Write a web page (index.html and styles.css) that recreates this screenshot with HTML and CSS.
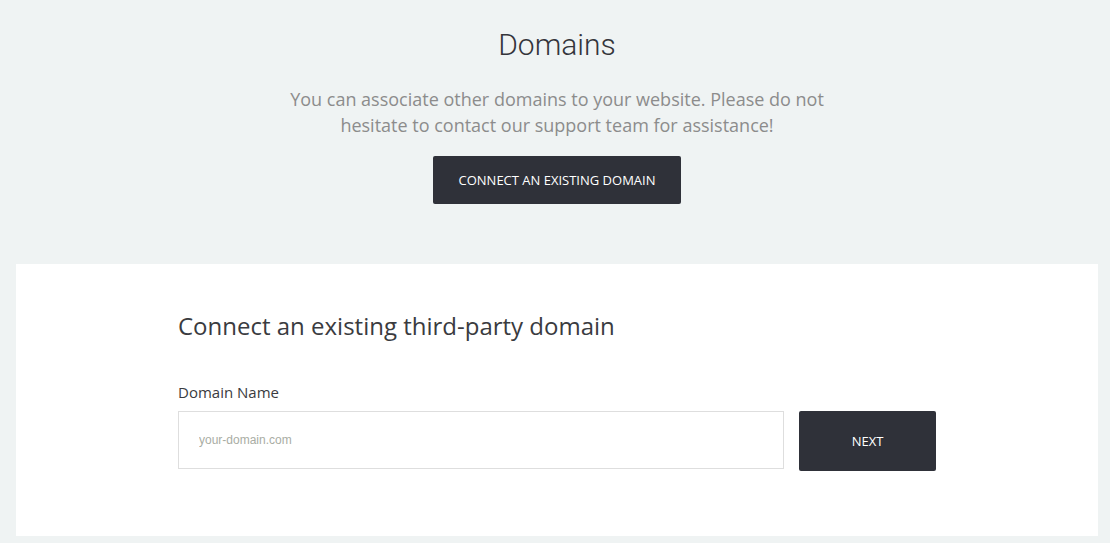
FILE: index.html
```html
<!DOCTYPE html>
<html>
<head>
<meta charset="utf-8">
<link rel="stylesheet" href="styles.css">
</head>
<body>
<div class="page">
  <section class="intro">
    <h1 class="title">Domains</h1>
    <p class="lead">You can associate other domains to your website. Please do not hesitate to contact our support team for assistance!</p>
    <button class="btn btn-connect">CONNECT AN EXISTING DOMAIN</button>
  </section>
  <section class="panel">
    <div class="panel-inner">
      <h2 class="panel-title">Connect an existing third-party domain</h2>
      <label class="label" for="domain">Domain Name</label>
      <div class="row">
        <input id="domain" class="input" type="text" placeholder="your-domain.com">
        <button class="btn btn-next">NEXT</button>
      </div>
    </div>
  </section>
</div>
</body>
</html>
```
FILE: styles.css
```css
html, body {
  margin: 0;
  padding: 0;
  background: #eff3f3;
}
.page {
  padding: 0 12px 8px 16px;
}
.intro {
  display: flex;
  flex-direction: column;
  align-items: center;
  padding-top: 27px;
  padding-bottom: 60px;
}
.title {
  margin: 0;
  font-family: Roboto, sans-serif;
  font-weight: 300;
  font-size: 30px;
  line-height: 36px;
  color: #34353b;
}
.lead {
  margin: 23px 0 0;
  max-width: 560px;
  text-align: center;
  font-family: "Open Sans", sans-serif;
  font-size: 18px;
  line-height: 26px;
  color: #8c8c8c;
}
.btn {
  border: 0;
  border-radius: 2px;
  background: #2f3139;
  color: #fff;
  font-family: "Open Sans", sans-serif;
  font-size: 13px;
  cursor: pointer;
}
.btn-connect {
  margin-top: 18px;
  width: 248px;
  height: 48px;
}
.panel {
  background: #fff;
  padding: 46px 0 65px;
}
.panel-inner {
  width: 758px;
  margin: 0 auto;
}
.panel-title {
  margin: 0;
  font-family: "Open Sans", sans-serif;
  font-weight: 400;
  font-size: 24px;
  line-height: 32px;
  color: #3a3b40;
}
.label {
  display: block;
  margin-top: 40px;
  font-family: "Open Sans", sans-serif;
  font-size: 15px;
  line-height: 20px;
  color: #3a3b40;
}
.row {
  display: flex;
  align-items: flex-start;
  gap: 15px;
  margin-top: 9px;
}
.input {
  box-sizing: border-box;
  width: 606px;
  height: 58px;
  margin: 0;
  border: 1px solid #dedede;
  border-radius: 0;
  padding: 0 20px;
  font-family: Arial, "Liberation Sans", sans-serif;
  font-size: 12px;
  color: #333;
  outline: none;
}
.input::placeholder {
  color: #a9ada4;
}
.btn-next {
  width: 137px;
  height: 60px;
}
```
